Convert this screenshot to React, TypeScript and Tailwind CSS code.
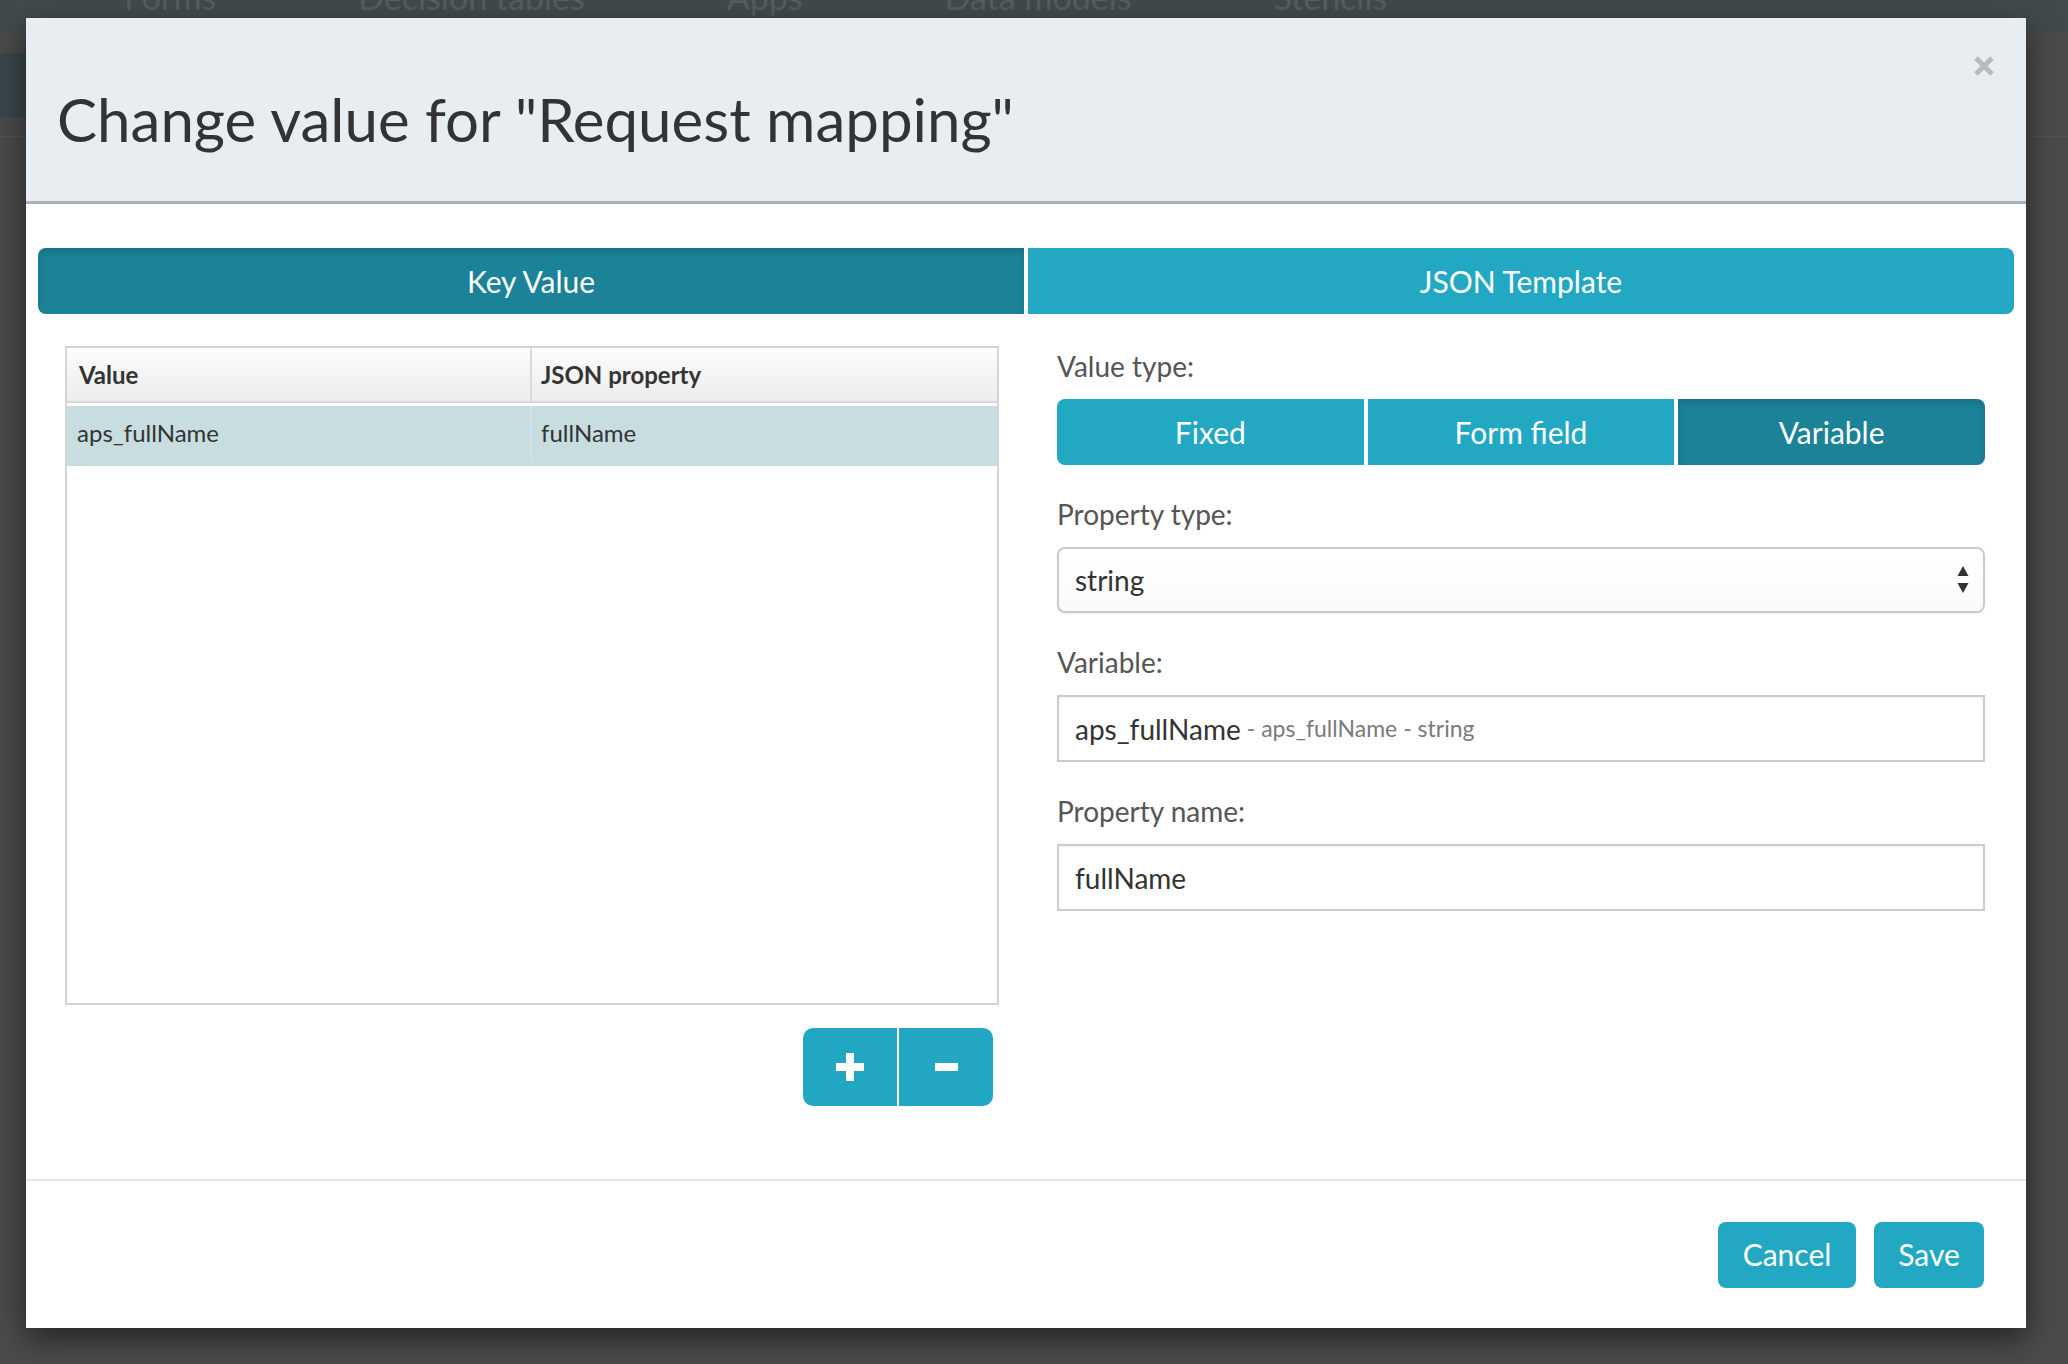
import React from 'react';

const NAV_ITEMS = ['Forms', 'Decision tables', 'Apps', 'Data models', 'Stencils'];
const VALUE_TYPES = ['Fixed', 'Form field', 'Variable'];

type Mapping = {
  value: string;
  property: string;
};

const MAPPINGS: Mapping[] = [{ value: 'aps_fullName', property: 'fullName' }];

function FieldLabel({ children }: { children: React.ReactNode }) {
  return <label className="mb-[13px] block text-[28px] leading-[40px] text-[#555]">{children}</label>;
}

function CloseIcon() {
  return (
    <svg width="22" height="20" viewBox="0 0 22 20">
      <path d="M3 2 L19 18 M19 2 L3 18" stroke="#b6bbbf" strokeWidth="5" strokeLinecap="butt" />
    </svg>
  );
}

function SelectArrows() {
  return (
    <svg width="12" height="28" viewBox="0 0 12 28">
      <path d="M6 0 L11.5 10 L0.5 10 Z" fill="#333" />
      <path d="M6 27 L11.5 17 L0.5 17 Z" fill="#333" />
    </svg>
  );
}

export default function App() {
  const activeTab = 'key-value';
  const activeValueType = 'Variable';

  return (
    <div className="relative h-[1364px] w-full overflow-hidden bg-[#4b4b4b] font-['Lato','Noto_Sans',sans-serif]">
      {/* page behind the overlay */}
      <div className="h-[33px] overflow-hidden bg-[#424b4c]">
        <div className="-mt-[20px] flex gap-[142px] pl-[124px] text-[34px] leading-none text-[#565f61]">
          {NAV_ITEMS.map((item) => (
            <span key={item}>{item}</span>
          ))}
        </div>
      </div>
      <div className="h-[104px] border-b border-[#545454] pt-[20px]">
        <div className="h-[64px] w-[160px] bg-[#3a474a]" />
      </div>

      {/* modal overlay */}
      <div className="absolute inset-0 pl-[26px] pt-[18px]">
        <div className="flex w-[2000px] flex-col bg-white shadow-[0_10px_30px_rgba(0,0,0,0.55)]">
          {/* header */}
          <div className="relative h-[186px] border-b-[3px] border-[#a9b1bc] bg-[#e8edf1] px-[31px] pt-[68px]">
            <h3 className="text-[60px] leading-[1.1] text-[#333]">Change value for "Request mapping"</h3>
            <button className="absolute right-[31px] top-[38px]">
              <CloseIcon />
            </button>
          </div>

          {/* body */}
          <div className="h-[975px] px-[12px] pt-[44px]">
            <div className="grid h-[66px] grid-cols-2 gap-[4px] text-[30px] text-white">
              <button
                className={`flex items-center justify-center rounded-l-[8px] ${
                  activeTab === 'key-value'
                    ? 'bg-[#1c8297] shadow-[inset_0_4px_6px_rgba(0,0,0,0.12)]'
                    : 'bg-[#23a8c4]'
                }`}
              >
                Key Value
              </button>
              <button className="flex items-center justify-center rounded-r-[8px] bg-[#23a8c4]">JSON Template</button>
            </div>

            <div className="mt-[32px] grid grid-cols-2 gap-[4px]">
              {/* left column: mapping table */}
              <div className="pl-[27px] pr-[25px]">
                <div className="h-[659px] border-2 border-[#d4d4d4] text-[24px] text-[#333]">
                  <div className="grid h-[55px] grid-cols-2 border-b-2 border-[#d6d6d6] bg-linear-to-b from-[#fdfdfd] to-[#ececec] font-bold">
                    <div className="flex items-center border-r-2 border-[#dadada] pl-[12px]">Value</div>
                    <div className="flex items-center pl-[9px]">JSON property</div>
                  </div>
                  {MAPPINGS.map((row) => (
                    <div key={row.value} className="mt-[3px] grid h-[60px] grid-cols-2 bg-[#c7dde0] pb-[6px]">
                      <div className="flex items-center border-r-2 border-[#d3e2e4] pl-[10px]">{row.value}</div>
                      <div className="flex items-center pl-[9px]">{row.property}</div>
                    </div>
                  ))}
                </div>
                <div className="mt-[23px] flex justify-end pr-[6px]">
                  <div className="flex gap-[2px]">
                    <button className="flex h-[78px] w-[94px] items-center justify-center rounded-l-[10px] bg-[#22a7c3]">
                      <svg width="28" height="28" viewBox="0 0 28 28">
                        <rect x="0" y="10" width="28" height="8" fill="white" />
                        <rect x="10" y="0" width="8" height="28" fill="white" />
                      </svg>
                    </button>
                    <button className="flex h-[78px] w-[94px] items-center justify-center rounded-r-[10px] bg-[#22a7c3]">
                      <svg width="23" height="8" viewBox="0 0 23 8">
                        <rect x="0" y="0" width="23" height="8" fill="white" />
                      </svg>
                    </button>
                  </div>
                </div>
              </div>

              {/* right column: value settings */}
              <div className="flex flex-col gap-[29px] px-[29px]">
                <div>
                  <FieldLabel>Value type:</FieldLabel>
                  <div className="grid h-[66px] grid-cols-3 gap-[4px] text-[30px] text-white">
                    {VALUE_TYPES.map((type, index) => (
                      <button
                        key={type}
                        className={`flex items-center justify-center ${index === 0 ? 'rounded-l-[8px]' : ''} ${
                          index === VALUE_TYPES.length - 1 ? 'rounded-r-[8px]' : ''
                        } ${
                          type === activeValueType
                            ? 'bg-[#1c8297] shadow-[inset_0_4px_6px_rgba(0,0,0,0.12)]'
                            : 'bg-[#23a8c4]'
                        }`}
                      >
                        {type}
                      </button>
                    ))}
                  </div>
                </div>

                <div>
                  <FieldLabel>Property type:</FieldLabel>
                  <div className="flex h-[66px] items-center justify-between rounded-[8px] border-2 border-[#cbcbcb] bg-linear-to-b from-white to-[#fafafa] pl-[16px] pr-[14px] text-[28px] text-[#333] shadow-[0_1px_2px_rgba(0,0,0,0.08)]">
                    <span>string</span>
                    <SelectArrows />
                  </div>
                </div>

                <div>
                  <FieldLabel>Variable:</FieldLabel>
                  <div className="flex h-[67px] items-center border-2 border-[#cccccc] pl-[16px] shadow-[inset_0_1px_2px_rgba(0,0,0,0.06)]">
                    <span className="text-[28px] text-[#333]">aps_fullName</span>
                    <span className="ml-[6px] text-[23px] text-[#7a7a7a]">- aps_fullName - string</span>
                  </div>
                </div>

                <div>
                  <FieldLabel>Property name:</FieldLabel>
                  <div className="flex h-[67px] items-center border-2 border-[#cccccc] pl-[16px] text-[28px] text-[#333] shadow-[inset_0_1px_2px_rgba(0,0,0,0.06)]">
                    fullName
                  </div>
                </div>
              </div>
            </div>
          </div>

          {/* footer */}
          <div className="flex h-[149px] items-center justify-end gap-[18px] border-t-2 border-[#e5e5e5] pr-[42px] text-[30px] text-white">
            <button className="flex h-[66px] w-[138px] items-center justify-center rounded-[8px] bg-[#23a8c4]">Cancel</button>
            <button className="flex h-[66px] w-[110px] items-center justify-center rounded-[8px] bg-[#23a8c4]">Save</button>
          </div>
        </div>
      </div>
    </div>
  );
}
